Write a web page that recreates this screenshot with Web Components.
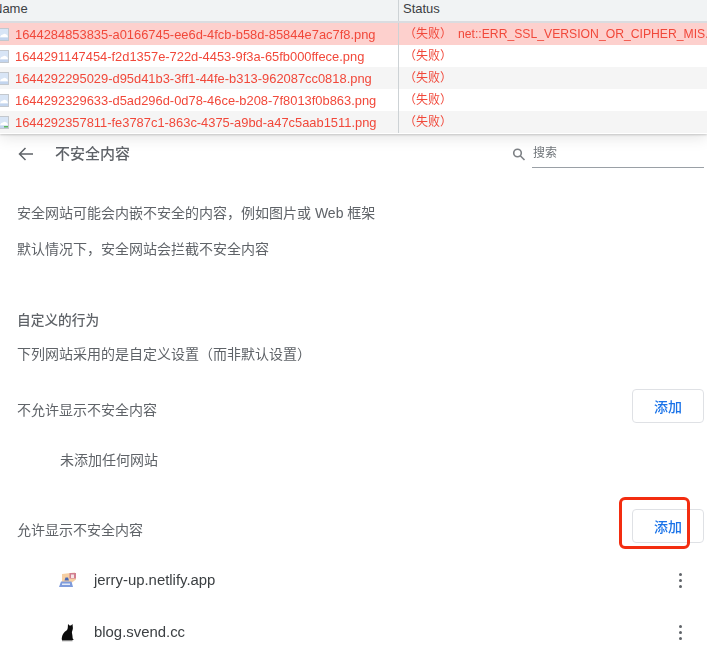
<!DOCTYPE html>
<html lang="zh">
<head>
<meta charset="utf-8">
<title>不安全内容</title>
<style>
html, body { margin: 0; height: 658px; overflow: hidden; background: #fff; }
body { font-family: "Liberation Sans", "Noto Sans CJK SC", sans-serif; }
</style>
</head>
<body>
<network-table>
  <network-row slot="rows" failed selected name="1644284853835-a0166745-ee6d-4fcb-b58d-85844e7ac7f8.png" detail="net::ERR_SSL_VERSION_OR_CIPHER_MIS."></network-row>
  <network-row slot="rows" failed name="1644291147454-f2d1357e-722d-4453-9f3a-65fb000ffece.png"></network-row>
  <network-row slot="rows" failed striped name="1644292295029-d95d41b3-3ff1-44fe-b313-962087cc0818.png"></network-row>
  <network-row slot="rows" failed name="1644292329633-d5ad296d-0d78-46ce-b208-7f8013f0b863.png"></network-row>
  <network-row slot="rows" failed striped loaded name="1644292357811-fe3787c1-863c-4375-a9bd-a47c5aab1511.png"></network-row>
</network-table>
<settings-page>
  <settings-head heading="不安全内容"></settings-head>
  <settings-text style="height:36px">安全网站可能会内嵌不安全的内容，例如图片或 Web 框架</settings-text>
  <settings-text style="height:36px">默认情况下，安全网站会拦截不安全内容</settings-text>
  <settings-text strong style="height:30px;margin-top:39px">自定义的行为</settings-text>
  <settings-text style="height:36px">下列网站采用的是自定义设置（而非默认设置）</settings-text>
  <site-section style="margin-top:17px" label="不允许显示不安全内容"></site-section>
  <settings-text indent style="height:40px;margin-top:17px">未添加任何网站</settings-text>
  <site-section highlight style="margin-top:29px" label="允许显示不安全内容"></site-section>
  <site-row style="margin-top:11px" host-name="jerry-up.netlify.app" icon="jerry"></site-row>
  <site-row host-name="blog.svend.cc" icon="cat"></site-row>
</settings-page>

<script>
class NetworkTable extends HTMLElement {
  constructor() {
    super();
    this.attachShadow({ mode: 'open' }).innerHTML = `
<style>
:host { display: block; position: relative; z-index: 1; height: 134px; background: #fff;
  box-shadow: 0 1px 2px rgba(0,0,0,.18), 0 4px 14px rgba(0,0,0,.1); font-size: 13px; overflow: hidden; }
.head { display: grid; grid-template-columns: 398px 1fr; height: 21px; background: #f1f3f4;
  border-bottom: 2px solid #dadce0; color: #3c4043; line-height: 17px; }
.name { margin-left: -7px; }
.status { border-left: 1px solid #cdd2d5; padding-left: 4px; }
.rows { filter: blur(.3px); }
</style>
<div class="head"><div class="name">Name</div><div class="status">Status</div></div>
<div class="rows"><slot name="rows"></slot></div>`;
  }
}

class NetworkRow extends HTMLElement {
  constructor() {
    super();
    const detail = this.getAttribute('detail');
    const strip = this.hasAttribute('loaded') ? '<rect x="5" y="10" width="4" height="1.500" fill="#5cb85c"/>' : '';
    this.attachShadow({ mode: 'open' }).innerHTML = `
<style>
:host { display: grid; grid-template-columns: 398px 1fr; height: 22px; line-height: 23px;
  color: #f1483a; white-space: nowrap; background: #fff; font-size: 12.9px; }
:host([striped]) { background: #f5f5f5; }
:host([selected]) { background: #fdd0cd; }
.file { display: flex; align-items: center; gap: 6px; overflow: hidden; }
svg { flex: none; margin-left: -1px; }
.state { display: flex; border-left: 1px solid #cdd2d5; padding-left: 5px; overflow: hidden; }
.fail { width: 54px; flex: none; font-size: 12px; }
.why { font-size: 12.2px; }
</style>
<div class="file">
  <svg width="10" height="13" viewBox="0 0 10 13">
    <rect x=".5" y=".5" width="9" height="12" fill="#d8e5f6" stroke="#c3c8ce"/>
    <path d="M1 9.500c.5-2 1.500-3 3-3 .8-1 2.500-1 3.200 0 1 .2 1.600 1.500 1.800 3z" fill="#fff"/>
    <rect x="1" y="9.500" width="8" height="2.500" fill="#c3d5ee"/>
    ${strip}
  </svg>
  <span>${this.getAttribute('name')}</span>
</div>
<div class="state"><span class="fail">（失败）</span>${detail ? `<span class="why">${detail}</span>` : ''}</div>`;
  }
}

class SettingsPage extends HTMLElement {
  constructor() {
    super();
    this.attachShadow({ mode: 'open' }).innerHTML = `
<style>
:host { display: block; color: #5f6368; font-size: 13px; filter: blur(.3px); }
</style>
<slot></slot>`;
  }
}

class SettingsHead extends HTMLElement {
  constructor() {
    super();
    this.attachShadow({ mode: 'open' }).innerHTML = `
<style>
:host { display: flex; align-items: flex-start; height: 41px; padding: 0 3px 0 18px; margin-bottom: 20px; }
.back { flex: none; margin-top: 13px; }
h1 { margin: 9px 0 0 22px; flex: 1; font-size: 15px; line-height: 22px; font-weight: 500; color: #5f6368; }
.search { display: flex; width: 172px; height: 33px; position: relative;
  border-bottom: 1.500px solid #9aa0a6; font-size: 12px; color: #70757a; }
.glass { position: absolute; left: -20px; top: 14px; }
.hint { padding: 11px 0 0 1px; line-height: 17px; }
</style>
<svg class="back" width="15" height="14" viewBox="0 0 15 14" fill="none" stroke="#5f6368" stroke-width="1.500">
  <path d="M15 7H1.500M7.500 1 1.500 7l6 6"/>
</svg>
<h1>${this.getAttribute('heading')}</h1>
<div class="search">
  <svg class="glass" width="14" height="13" viewBox="0 0 14 13" fill="none" stroke="#7d8185" stroke-width="1.600">
    <circle cx="5.500" cy="5" r="3.800"/><path d="M8.300 7.800 12.500 12"/>
  </svg>
  <span class="hint">搜索</span>
</div>`;
  }
}

class SettingsText extends HTMLElement {
  constructor() {
    super();
    this.attachShadow({ mode: 'open' }).innerHTML = `
<style>
:host { display: flex; align-items: center; padding-left: 17px; font-size: 14px; line-height: 20px; }
:host([indent]) { padding-left: 60px; }
:host([strong]) { font-weight: 500; font-size: 13.700px; }
</style>
<slot></slot>`;
  }
}

class AddButton extends HTMLElement {
  constructor() {
    super();
    this.attachShadow({ mode: 'open' }).innerHTML = `
<style>
:host { display: flex; align-items: center; justify-content: center; width: 70px; height: 32px;
  border: 1px solid #dfe1e5; border-radius: 4px; color: #1a73e8; font-size: 14px; font-weight: 500; background: #fff; }
</style>
<slot>添加</slot>`;
  }
}

class SiteSection extends HTMLElement {
  constructor() {
    super();
    this.attachShadow({ mode: 'open' }).innerHTML = `
<style>
:host { display: flex; justify-content: space-between; height: 34px; padding: 0 3px 0 17px; font-size: 14px; position: relative; }
.label { padding-top: 11px; line-height: 20px; }
.mark { position: absolute; left: 619px; top: -12px; width: 65px; height: 46px; border: 3px solid #f32d10; border-radius: 6px; }
</style>
<div class="label">${this.getAttribute('label')}</div>
<add-button></add-button>
${this.hasAttribute('highlight') ? '<div class="mark"></div>' : ''}`;
  }
}

const SITE_ICONS = {
  jerry: `<svg width="18" height="16" viewBox="0 0 18 16">
    <path d="M3 2 16 .5l1 7-4 3H3z" fill="#f6cfa3"/>
    <rect x="10.500" y="1" width="6.500" height="5.500" fill="#d17f90"/>
    <rect x="12" y="2.500" width="3" height="3.500" fill="#f6e4e6"/>
    <path d="M6.500 5.500h2.500l1 3H5.500z" fill="#4a6ab4"/>
    <path d="M0 15 2 9.500h10.500l1.500 5.500z" fill="#7f9cdc"/>
    <rect x="3" y="11.500" width="8" height="1.500" fill="#e3eaf8"/>
  </svg>`,
  cat: `<svg width="18" height="20" viewBox="0 0 18 20">
    <path d="M9 2l1.500 1.500h1.500L13.500 2l.4 4c0 2-1 3-1 4.500.3 2 .8 4 .8 6l.8 1V18H3c-.4-.8-.2-2 0-3 .2-2.500 2-5 4.500-6.500.6-.5 1.200-1.500 1.300-3z" fill="#0b0b0b"/>
    <rect x="3" y="18.200" width="10.500" height="1" fill="#666"/>
  </svg>`
};

class SiteRow extends HTMLElement {
  constructor() {
    super();
    this.attachShadow({ mode: 'open' }).innerHTML = `
<style>
:host { display: flex; align-items: center; height: 52px; padding: 0 25px 0 59px; font-size: 14.900px; color: #3c4043; }
.icon { width: 18px; height: 20px; display: flex; align-items: center; }
.host { flex: 1; margin-left: 17px; }
.more { display: grid; gap: 3px; }
.more i { width: 3px; height: 3px; border-radius: 50%; background: #5f6368; }
</style>
<div class="icon">${SITE_ICONS[this.getAttribute('icon')]}</div>
<div class="host">${this.getAttribute('host-name')}</div>
<div class="more"><i></i><i></i><i></i></div>`;
  }
}

customElements.define('network-table', NetworkTable);
customElements.define('network-row', NetworkRow);
customElements.define('settings-page', SettingsPage);
customElements.define('settings-head', SettingsHead);
customElements.define('settings-text', SettingsText);
customElements.define('add-button', AddButton);
customElements.define('site-section', SiteSection);
customElements.define('site-row', SiteRow);
</script>
</body>
</html>
